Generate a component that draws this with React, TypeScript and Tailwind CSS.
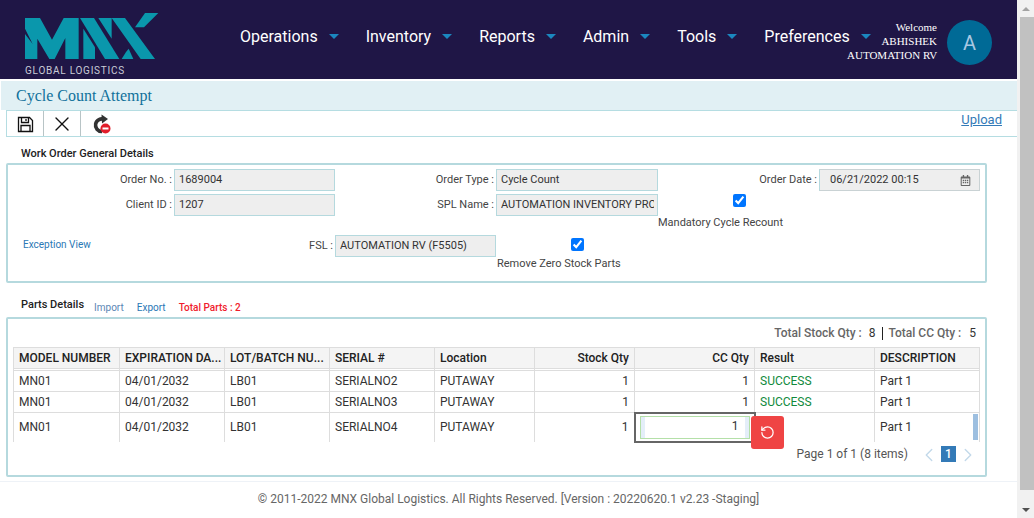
import { ChevronLeft, ChevronRight, RotateCcw, X } from "lucide-react";
import { FaRegCalendarAlt } from "react-icons/fa";

const navItems = ["Operations", "Inventory", "Reports", "Admin", "Tools", "Preferences"];

const columns = [
  { label: "MODEL NUMBER", width: "w-[106px]", align: "text-left" },
  { label: "EXPIRATION DA...", width: "w-[105px]", align: "text-left" },
  { label: "LOT/BATCH NU...", width: "w-[105px]", align: "text-left" },
  { label: "SERIAL #", width: "w-[105px]", align: "text-left" },
  { label: "Location", width: "w-[100px]", align: "text-left" },
  { label: "Stock Qty", width: "w-[100px]", align: "text-right" },
  { label: "CC Qty", width: "w-[120px]", align: "text-right" },
  { label: "Result", width: "w-[120px]", align: "text-left" },
  { label: "DESCRIPTION", width: "w-[105px]", align: "text-left" },
];

const rows = [
  { serial: "SERIALNO2", result: "SUCCESS" },
  { serial: "SERIALNO3", result: "SUCCESS" },
];

function Logo() {
  return (
    <svg width="145" height="70" viewBox="0 0 435 210" className="absolute left-[-5px] top-[8px]">
      <g fill="#0a97ac">
        <path d="M15 30H60L96 95L131 30H176V153H136V90L104 153H88L52 92V153H15V78L38 108L15 62Z" />
        <path d="M190 62L225 118V153H190Z" />
        <path d="M180 30H222L298 153H255Z" />
        <path d="M235 30H315L405 153H362L275 30V92Z" />
        <path d="M375 15H415L372 58H345Z" />
        <path d="M305 153H340L326 122L318 132Z" />
      </g>
    </svg>
  );
}

function SaveIcon() {
  return (
    <svg width="17" height="17" viewBox="0 0 17 17" fill="none" stroke="#111" strokeWidth="1.3">
      <path d="M1.5 1.5H12.5L15.5 4.5V15.5H1.5Z" />
      <path d="M4.5 1.5V6.5H11.5V1.5" />
      <path d="M9 3V5" />
      <path d="M4 15.5V9.5H13V15.5" />
    </svg>
  );
}

function RecountIcon() {
  return (
    <svg width="22" height="22" viewBox="0 0 22 22">
      <path d="M14.5 6.5A6.3 6.3 0 1 0 12 18.5" fill="none" stroke="#333" strokeWidth="3.6" />
      <path d="M11.5 1.5L18 6L12 10.5Z" fill="#333" />
      <circle cx="15.5" cy="15.5" r="5" fill="#e11d2a" />
      <rect x="12.5" y="14.5" width="6" height="2" fill="#fff" />
    </svg>
  );
}

function ReadOnlyField({ value }: { value: string }) {
  return (
    <div className="h-[22px] border border-[#b5d9de] bg-[#eeeeee] pl-[4px] pr-[3px] text-[11px] leading-[20px] text-[#333]">
      <div className="overflow-hidden whitespace-nowrap">{value}</div>
    </div>
  );
}

function Label({ text }: { text: string }) {
  return <div className="flex h-[22px] items-center justify-end pr-[2px] text-[11px] text-[#444]">{text}</div>;
}

export default function App() {
  return (
    <div className="flex h-[518px] w-[1034px] overflow-hidden bg-white font-[Roboto,sans-serif]">
      <div className="flex w-[1017px] flex-col">
        <header className="flex h-[79px] bg-[#1f1646]">
          <div className="relative ml-[25px] h-[79px] w-[215px] shrink-0">
            <Logo />
            <div className="absolute left-0 top-[65px] text-[10px] leading-[12px] tracking-[0.75px] text-[#c9ccd6]">
              GLOBAL LOGISTICS
            </div>
          </div>
          <nav className="flex h-[73px] w-[607px] shrink-0 items-center gap-[27px] whitespace-nowrap text-[16px] text-white">
            {navItems.map((item) => (
              <div key={item} className="flex shrink-0 items-center gap-[11px]">
                <span>{item}</span>
                <span className="h-0 w-0 border-x-[5px] border-t-[5px] border-x-transparent border-t-[#1b87bf]" />
              </div>
            ))}
          </nav>
          <div className="relative flex w-[145px] shrink-0 items-center gap-[10px] pt-[6px]">
            <div className="mb-[3px] w-[90px] whitespace-nowrap text-right font-['Liberation_Serif',serif] text-[11px] leading-[14px] text-white">
              <div>Welcome</div>
              <div>ABHISHEK</div>
              <div>AUTOMATION RV</div>
            </div>
            <div className="flex h-[45px] w-[45px] items-center justify-center rounded-full bg-[#006a96] text-[20px] text-[#a9c8e2]">
              A
            </div>
          </div>
        </header>

        <div className="ml-[1px] mt-[2px] flex h-[29px] items-center bg-[#e1f0f4] pl-[15px] font-['Liberation_Serif',serif] text-[16px] text-[#10709b]">
          Cycle Count Attempt
        </div>

        <div className="ml-[6px] flex h-[27px] items-stretch border-y border-[#b5dde2]">
          <div className="flex w-[38px] items-center justify-center border-x border-[#b5dde2] border-r-[#b8c4c6] pt-[2px]">
            <SaveIcon />
          </div>
          <div className="flex w-[37px] items-center justify-center border-r border-[#b8c4c6] pt-[1px]">
            <X size={24} strokeWidth={1.4} color="#111" />
          </div>
          <div className="flex w-[40px] items-center justify-center pt-[1px]">
            <RecountIcon />
          </div>
          <a className="ml-auto mr-[15px] text-[13px] leading-[18px] text-[#337ab7] underline">Upload</a>
        </div>

        <div className="h-[26px] pl-[21px] pt-[11px] text-[11px] font-medium leading-[12px] text-[#222]">
          Work Order General Details
        </div>

        <section className="ml-[6px] h-[120px] w-[981px] rounded-[2px] border-2 border-[#b5d9de] px-[5px] pt-[4px]">
          <div className="grid w-[967px] grid-cols-[161px_161px_161px_162px_161px_161px] grid-rows-[25px_41px_22px]">
            <Label text="Order No. :" />
            <ReadOnlyField value="1689004" />
            <Label text="Order Type :" />
            <ReadOnlyField value="Cycle Count" />
            <Label text="Order Date :" />
            <div className="flex h-[22px] border border-[#c9d2d4] border-l-[#b5d9de] bg-[#eeeeee] text-[11px] text-[#333]">
              <span className="flex-1 self-center pl-[10px]">06/21/2022 00:15</span>
              <span className="flex w-[27px] items-center justify-center">
                <FaRegCalendarAlt size={11} color="#666" />
              </span>
            </div>

            <Label text="Client ID :" />
            <ReadOnlyField value="1207" />
            <Label text="SPL Name :" />
            <ReadOnlyField value="AUTOMATION INVENTORY PROCESS" />
            <div className="flex flex-col items-center">
              <input type="checkbox" defaultChecked className="m-0 ml-[2px] h-[13px] w-[13px]" />
              <span className="mt-[9px] self-start whitespace-nowrap text-[11px] leading-[13px] text-[#444]">
                Mandatory Cycle Recount
              </span>
            </div>
            <div />

            <div className="pl-[10px] pt-[4px] text-[10px] leading-[12px] text-[#2a78b5]">Exception View</div>
            <Label text="FSL :" />
            <ReadOnlyField value="AUTOMATION RV (F5505)" />
            <div className="flex flex-col items-center pt-[3px]">
              <input type="checkbox" defaultChecked className="m-0 h-[13px] w-[13px]" />
              <span className="mt-[6px] self-start pl-[1px] whitespace-nowrap text-[11px] leading-[13px] text-[#444]">
                Remove Zero Stock Parts
              </span>
            </div>
          </div>
        </section>

        <div className="flex h-[34px] items-start pl-[21px] pt-[16px] text-[10px] leading-[12px]">
          <span className="text-[11px] font-medium text-[#222]">Parts Details</span>
          <span className="ml-[10px] mt-[3px] text-[#5b86b5]">Import</span>
          <span className="ml-[13px] mt-[3px] text-[#2a78b5]">Export</span>
          <span className="ml-[13px] mt-[3px] font-medium text-[#f01c2c]">Total Parts : 2</span>
        </div>

        <section className="ml-[6px] h-[160px] w-[981px] rounded-[2px] border-2 border-[#b5d9de] px-[5px]">
          <div className="flex h-[28px] items-center justify-end pr-[4px] text-[12px]">
            <span className="font-medium text-[#666]">Total Stock Qty :</span>
            <span className="ml-[7px] text-[#333]">8</span>
            <span className="ml-[6px] h-[13px] border-l border-[#222]" />
            <span className="ml-[6px] font-medium text-[#666]">Total CC Qty :</span>
            <span className="ml-[8px] text-[#333]">5</span>
          </div>

          <div className="relative w-[967px]">
            <table className="w-[966px] table-fixed border-collapse text-[12px] text-[#333]">
              <thead>
                <tr className="h-[21px] bg-[#f4f4f4]">
                  {columns.map((col) => (
                    <th
                      key={col.label}
                      className={`${col.width} ${col.align} overflow-hidden whitespace-nowrap border border-[#dddddd] px-[5px] font-medium text-[#222]`}
                    >
                      {col.label}
                    </th>
                  ))}
                </tr>
                <tr className="h-[2px]">
                  {columns.map((col) => (
                    <td key={col.label} className="h-[2px] border-x border-[#dddddd] p-0" />
                  ))}
                </tr>
              </thead>
              <tbody>
                {rows.map((row) => (
                  <tr key={row.serial} className="h-[21px]">
                    <td className="border border-[#dddddd] px-[5px] py-0">MN01</td>
                    <td className="border border-[#dddddd] px-[5px] py-0">04/01/2032</td>
                    <td className="border border-[#dddddd] px-[5px] py-0">LB01</td>
                    <td className="border border-[#dddddd] px-[5px] py-0">{row.serial}</td>
                    <td className="border border-[#dddddd] px-[5px] py-0">PUTAWAY</td>
                    <td className="border border-[#dddddd] px-[5px] py-0 text-right">1</td>
                    <td className="border border-[#dddddd] px-[5px] py-0 text-right">1</td>
                    <td className="border border-[#dddddd] px-[5px] py-0 text-[#118a3c]">{row.result}</td>
                    <td className="border border-[#dddddd] px-[5px] py-0">Part 1</td>
                  </tr>
                ))}
                <tr className="h-[29px]">
                  <td className="border-x border-t border-[#dddddd] px-[5px] py-0">MN01</td>
                  <td className="border-x border-t border-[#dddddd] px-[5px] py-0">04/01/2032</td>
                  <td className="border-x border-t border-[#dddddd] px-[5px] py-0">LB01</td>
                  <td className="border-x border-t border-[#dddddd] px-[5px] py-0">SERIALNO4</td>
                  <td className="border-x border-t border-[#dddddd] px-[5px] py-0">PUTAWAY</td>
                  <td className="border-x border-t border-[#dddddd] px-[5px] py-0 text-right">1</td>
                  <td className="border-2 border-[#666666] px-[4px] py-0">
                    <div className="flex h-[23px] border border-[#b4e0a8] bg-[#e4eef9] px-[4px]">
                      <div className="flex flex-1 items-center justify-end bg-white pb-[3px] pr-[6px]">1</div>
                    </div>
                  </td>
                  <td className="border-x border-t border-[#dddddd] p-0" />
                  <td className="border-x border-t border-[#dddddd] px-[5px] py-0">Part 1</td>
                </tr>
              </tbody>
            </table>
            <div className="absolute left-[738px] top-[69px] flex h-[33px] w-[33px] items-center justify-center rounded-[3px] bg-[#ef4444]">
              <RotateCcw size={15} color="#fff" strokeWidth={2} />
            </div>
            <div className="absolute right-[2px] top-[67px] h-[26px] w-[5px] bg-[#9dbfe0]" />
          </div>

          <div className="mt-[3px] flex h-[16px] w-[967px] items-center justify-end text-[12px] text-[#555]">
            <span>Page 1 of 1 (8 items)</span>
            <ChevronLeft size={22} strokeWidth={1.5} color="#c3d9ea" className="ml-[10px] mt-[3px] shrink-0" />
            <span className="ml-[1px] flex h-[16px] w-[15px] items-center justify-center bg-[#337ab7] font-medium text-white">
              1
            </span>
            <ChevronRight size={22} strokeWidth={1.5} color="#c3d9ea" className="ml-[1px] mr-[1px] mt-[3px] shrink-0" />
          </div>
        </section>

        <footer className="mt-[4px] flex h-[34px] items-center justify-center border-t border-[#eef2f7] text-[12px] text-[#666]">
          © 2011-2022 MNX Global Logistics. All Rights Reserved. [Version : 20220620.1 v2.23 -Staging]
        </footer>
      </div>

      <div className="flex w-[17px] flex-col items-center bg-[#f1f1f1]">
        <div className="flex h-[17px] items-center justify-center">
          <span className="h-0 w-0 border-x-[4px] border-b-[4px] border-x-transparent border-b-[#a3a3a3]" />
        </div>
        <div className="ml-[2px] h-[473px] w-[14px] bg-[#c1c1c1]" />
        <div className="mt-auto flex h-[17px] items-center justify-center">
          <span className="h-0 w-0 border-x-[4px] border-t-[4px] border-x-transparent border-t-[#505050]" />
        </div>
      </div>
    </div>
  );
}
